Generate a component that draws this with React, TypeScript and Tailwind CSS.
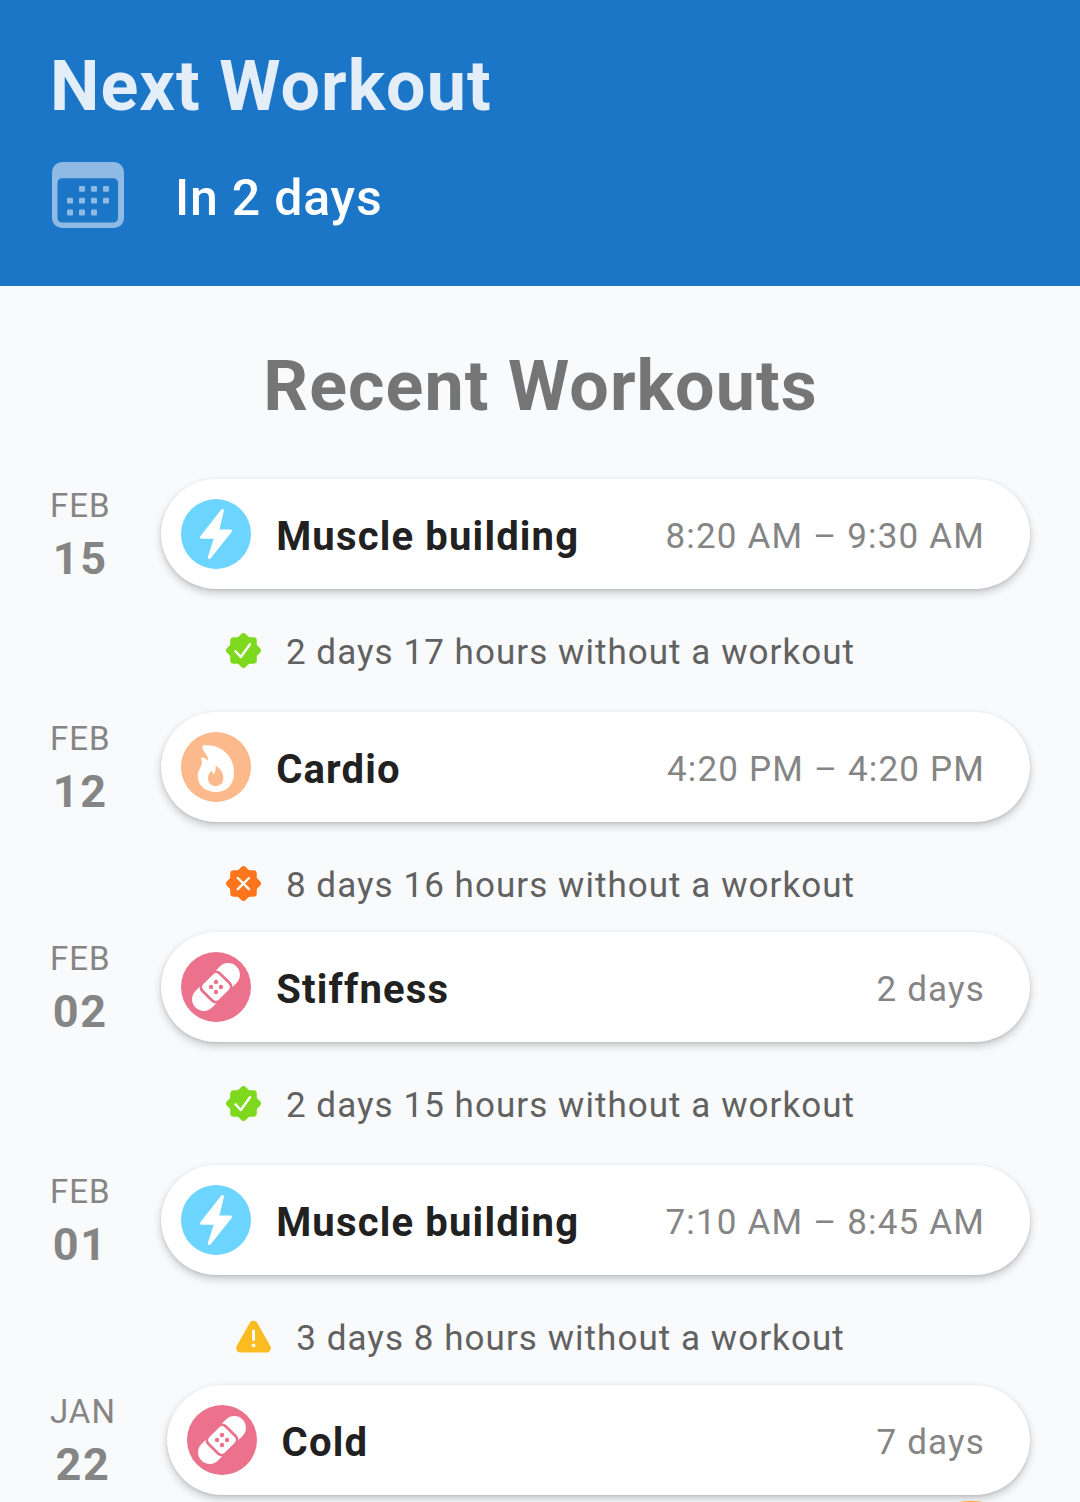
import React from "react";

type Kind = "muscle" | "cardio" | "injury";
type Status = "ok" | "bad" | "warn";

interface Entry {
  month: string;
  day: string;
  kind: Kind;
  title: string;
  detail: string;
  gap?: { status: Status; text: string; tight?: boolean };
}

const entries: Entry[] = [
  {
    month: "FEB", day: "15", kind: "muscle", title: "Muscle building", detail: "8:20 AM – 9:30 AM",
    gap: { status: "ok", text: "2 days 17 hours without a workout" },
  },
  {
    month: "FEB", day: "12", kind: "cardio", title: "Cardio", detail: "4:20 PM – 4:20 PM",
    gap: { status: "bad", text: "8 days 16 hours without a workout", tight: true },
  },
  {
    month: "FEB", day: "02", kind: "injury", title: "Stiffness", detail: "2 days",
    gap: { status: "ok", text: "2 days 15 hours without a workout" },
  },
  {
    month: "FEB", day: "01", kind: "muscle", title: "Muscle building", detail: "7:10 AM – 8:45 AM",
    gap: { status: "warn", text: "3 days 8 hours without a workout", tight: true },
  },
  { month: "JAN", day: "22", kind: "injury", title: "Cold", detail: "7 days" },
];

function CalendarIcon() {
  const dots = [
    [27, 24], [39, 24], [51, 24],
    [15, 35.8], [27, 35.8], [39, 35.8], [51, 35.8],
    [15, 47.6], [27, 47.6], [39, 47.6],
  ];
  return (
    <svg width="72" height="66" viewBox="0 0 72 66" fill="#8fbae3" className="shrink-0">
      <path
        fillRule="evenodd"
        d="M10 0H62A10 10 0 0 1 72 10V56A10 10 0 0 1 62 66H10A10 10 0 0 1 0 56V10A10 10 0 0 1 10 0ZM10 16.3A4.500 4.500 0 0 0 5.500 20.800V56A4.500 4.500 0 0 0 10 60.500H61.500A4.500 4.500 0 0 0 66 56V20.800A4.500 4.500 0 0 0 61.500 16.300Z"
      />
      {dots.map(([x, y]) => (
        <rect key={`${x}-${y}`} x={x} y={y} width="6" height="5.800" rx="1.200" />
      ))}
    </svg>
  );
}

function KindIcon({ kind }: { kind: Kind }) {
  if (kind === "muscle") {
    return (
      <svg width="70" height="70" viewBox="0 0 70 70" className="shrink-0">
        <circle cx="35" cy="35" r="35" fill="#6bd5ff" />
        <path
          d="M41.500 11.500L20.500 38.300H34.700L28.300 58.500L49.500 32H36.500Z"
          fill="#fff" stroke="#fff" strokeWidth="3" strokeLinejoin="round"
        />
      </svg>
    );
  }
  if (kind === "cardio") {
    return (
      <svg width="70" height="70" viewBox="0 0 70 70" className="shrink-0">
        <circle cx="35" cy="35" r="35" fill="#fcb98b" />
        <path
          d="M22.300 13.300C32 12.300 41 15.700 46.500 22.300C50.800 27.500 53 33.500 53 41C53 53 45.500 60 35 60C24.500 60 16.700 53.500 16.700 44C16.700 37.500 20.800 35.500 20.800 30.500C20.800 28.300 20.300 26.800 20 25.500C22.500 25.200 24.800 26.300 26.600 28.800C27.500 26.800 26.700 24.600 25 22.300C22.800 19.500 21.300 17.500 21.400 14.500C21.400 13.800 21.700 13.400 22.300 13.300Z"
          fill="#fff"
        />
        <path
          d="M34.600 33.800C39.200 36.300 42.300 40.500 42.300 46C42.300 51 39.300 54 34.700 54C30 54 27 50.500 27 46C27 42.700 28.600 41 30 38.700C31.500 39.500 32 41 32.300 42.800C34.700 40 35 37.200 34.600 33.800Z"
          fill="#fcb98b"
        />
      </svg>
    );
  }
  return (
    <svg width="70" height="70" viewBox="0 0 70 70" className="shrink-0">
      <circle cx="35" cy="35" r="35" fill="#ec718d" />
      <g transform="rotate(-45 35 35)">
        <rect x="6" y="23.300" width="58" height="23.400" rx="11.700" fill="#fff" />
        <rect x="22.700" y="22.700" width="24.600" height="24.600" rx="5.500" fill="#fff" stroke="#ec718d" strokeWidth="2.800" />
      </g>
      <g fill="#ec718d">
        <circle cx="35" cy="30" r="2.200" />
        <circle cx="30" cy="35" r="2.200" />
        <circle cx="40" cy="35" r="2.200" />
        <circle cx="35" cy="40" r="2.200" />
      </g>
    </svg>
  );
}

function StatusIcon({ status }: { status: Status }) {
  if (status === "warn") {
    return (
      <svg width="35" height="35" viewBox="0 0 35 35" className="shrink-0">
        <path d="M17.500 5.900L30.600 29.200H4.400Z" fill="#fabc20" stroke="#fabc20" strokeWidth="8.500" strokeLinejoin="round" />
        <path d="M17.500 12V20.600" stroke="#fff" strokeWidth="3" strokeLinecap="round" />
        <circle cx="17.500" cy="26.400" r="1.900" fill="#fff" />
      </svg>
    );
  }
  const color = status === "ok" ? "#7ed91e" : "#ff751c";
  return (
    <svg width="35" height="35" viewBox="0 0 35 35" className="shrink-0">
      <rect x="4.200" y="4.200" width="26.600" height="26.600" rx="3.500" fill={color} />
      <rect x="4.200" y="4.200" width="26.600" height="26.600" rx="3.500" fill={color} transform="rotate(45 17.500 17.500)" />
      <path
        d={status === "ok" ? "M9.500 18.300L14.800 24L24 11.300" : "M11.800 12L23 23.200M23 12L11.800 23.200"}
        fill="none" stroke="#fff" strokeWidth="2.400" strokeLinecap="round" strokeLinejoin="round"
      />
    </svg>
  );
}

function WorkoutRow({ entry }: { entry: Entry }) {
  return (
    <div className="flex h-[110px] px-[50px]">
      <div className="mr-[50.600px] flex flex-col items-center text-[#858585]">
        <span className="text-[33px] leading-[53px] tracking-[1px]">{entry.month}</span>
        <span className="text-[45px] leading-[53px] font-bold tracking-[1.600px]">{entry.day}</span>
      </div>
      <div className="flex flex-1 items-center rounded-full bg-white pl-5 pr-[45px] shadow-[0_4px_8px_rgba(0,0,0,0.2),0_1px_3px_rgba(0,0,0,0.1)]">
        <KindIcon kind={entry.kind} />
        <span className="ml-[25px] flex-1 pt-1.5 text-[40px] leading-[48px] font-bold tracking-[1.180px] text-[#212121]">
          {entry.title}
        </span>
        <span className="pt-1.5 text-[35px] leading-[42px] tracking-[1.180px] text-[#858585]">{entry.detail}</span>
      </div>
    </div>
  );
}

function RestGap({ gap }: { gap: NonNullable<Entry["gap"]> }) {
  return (
    <div className={`flex items-start justify-center pt-[43px] pl-px ${gap.tight ? "h-[110px]" : "h-[123px]"}`}>
      <div className="mt-px mr-[25px]">
        <StatusIcon status={gap.status} />
      </div>
      <span className="text-[35px] leading-[42px] tracking-[1.050px] text-[#616161]">{gap.text}</span>
    </div>
  );
}

export default function App() {
  return (
    <div className="relative h-[1502px] w-[1080px] overflow-hidden bg-[#f9fafc] font-['Roboto',sans-serif] whitespace-nowrap">
      <header className="h-[286px] bg-[#1b76c7] px-[50px] pt-[46px]">
        <h1 className="text-[70px] leading-[80px] font-bold tracking-[1.050px] text-[#e4eef9]">Next Workout</h1>
        <div className="mt-9 flex items-start pl-[2px]">
          <CalendarIcon />
          <span className="ml-[51px] text-[50px] leading-[72px] font-medium tracking-[0.800px] text-white">In 2 days</span>
        </div>
      </header>
      <h2 className="mt-[60px] mb-[53px] pl-px text-center text-[70px] leading-[80px] font-bold tracking-[1.080px] text-[#757575]">
        Recent Workouts
      </h2>
      <main>
        {entries.map((entry) => (
          <React.Fragment key={entry.month + entry.day}>
            <WorkoutRow entry={entry} />
            {entry.gap && <RestGap gap={entry.gap} />}
          </React.Fragment>
        ))}
      </main>
      <div className="absolute top-[1501px] left-[896px] size-[150px] rounded-full bg-[#f9a32b]" />
    </div>
  );
}
